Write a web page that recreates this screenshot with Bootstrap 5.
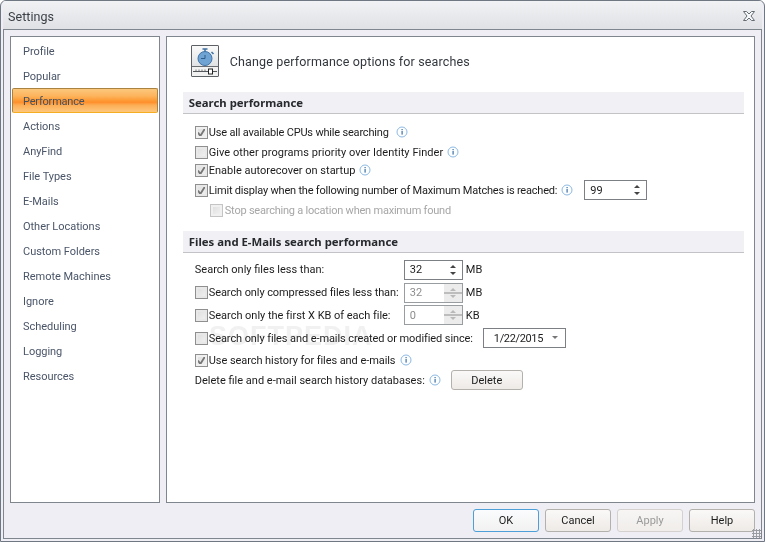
<!DOCTYPE html>
<html lang="en">
<head>
<meta charset="utf-8">
<title>Settings</title>
<link href="https://cdn.jsdelivr.net/npm/bootstrap@5.3.0/dist/css/bootstrap.min.css" rel="stylesheet">
<style>
html,body{margin:0;height:542px;overflow:hidden;background:#fff}
body{font-family:Roboto,"Liberation Sans",sans-serif;font-size:11px;color:#1c1c1c;line-height:1}
.win{width:765px;height:542px;background:#eeeef4;border:1px solid #6e7782;border-radius:6px 6px 0 0;position:relative;overflow:hidden}
.titlebar{height:29px;background:linear-gradient(#f1f2f4,#dfe1e5);padding:4px 5px 0;font-size:12.5px;color:#3a3f46;letter-spacing:.05px;border-bottom:1px solid #80868d;margin:0 2px}
.frame{height:509px;margin:0 2px;border:solid #80868d;border-width:0 1px 1px 1px;padding:6px 6px 0 6px}
.panes{height:467px;gap:6px}
.sidepane{width:150px;background:#fff;border:1px solid #80868d;padding:1px}
.sideitem{height:25px;padding:1px 0 0 11px;color:#4a5568;display:flex;align-items:center;font-size:11px;letter-spacing:-.03px}
.sideitem.chosen{color:#46505e;border:1px solid #a9833f;border-bottom-color:#f5ae22;border-radius:2px;padding-left:10px;letter-spacing:-.2px;
background:linear-gradient(#fbc77c 0,#fdb55d 30%,#fd9a35 50%,#ff8f2c 58%,#fdae56 70%,#fdc77d 100%)}
.mainpane{width:590px;background:#fff;border:1px solid #80868d;padding:8px 10px 0 16px;position:relative}
.iconbox{width:28px;height:32px;margin-left:8px;background:linear-gradient(#fafafa,#d4d6d8);border:1px solid #5d6065;border-radius:1px}
.headline{font-size:12.5px;letter-spacing:.15px;margin-left:11px;margin-top:3px;color:#33383e}
.sect{height:22px;background:#f0f0f5;border-bottom:1px solid #c2c3c6;padding-left:6px;font-family:"Noto Sans","Liberation Sans",sans-serif;font-weight:700;font-size:11.35px;color:#26292d}
.sect-a{margin-top:15px}
.sect-b{margin-top:13px}
.optgroup-a{margin-top:8px;padding-left:12px}
.optgroup-b{margin-top:5px;padding-left:12px}
.optrow{display:flex;align-items:center;position:relative}
.h16{height:16px}.h20{height:20px}.h24{height:24px}.h23{height:23px}.h22{height:22px}
.sub-row{padding-left:15px}
.tick{appearance:none;width:13px;height:13px;margin:0;flex:none;border:1px solid #8f8f8f;background:linear-gradient(135deg,#dcdcdc,#f4f4f4);box-shadow:inset 0 0 0 2px #e8e8e8}
.tick:checked{background:url("data:image/svg+xml,%3Csvg xmlns='http://www.w3.org/2000/svg' viewBox='0 0 13 13'%3E%3Cpath d='M3 6.500l2.300 3.500L10 2.500' fill='none' stroke='%23777' stroke-width='1.800'/%3E%3C/svg%3E") center/13px no-repeat,linear-gradient(135deg,#dcdcdc,#f4f4f4)}
.tick:disabled{border-color:#c4c4c4;box-shadow:inset 0 0 0 2px #f0f0f0}
.tick.keep:disabled{border-color:#8f8f8f}
.lbl{margin:0;padding-left:1px;white-space:nowrap}
.flush{margin-left:-1px}
.ls-a{letter-spacing:-.19px}
.ls-b{letter-spacing:.05px}
.ls-c{letter-spacing:-.2px}
.ls-d{letter-spacing:-.22px;padding-left:2px}
.ls-e{letter-spacing:-.09px}
.ls-f{letter-spacing:-.03px}
.ls-g{letter-spacing:0}
.ls-h{letter-spacing:-.07px}
.muted-lbl{color:#a6a6a6}
.infoicon{width:12px;height:12px;flex:none;margin-left:4px}
.infoicon.far{margin-left:7px}
.infoicon.mid{margin-left:5px}
.labcell{flex:none;display:flex;align-items:center}
.labcell.first{width:209px}
.labcell.wide{width:288px}
.spin{height:20px;border:1px solid #7c7f83;background:#fff;display:flex;align-items:stretch;flex:none;padding-left:5px}
.spin .val{flex:1;display:flex;align-items:center}
.spin .arrows{width:18px;display:flex;flex-direction:column;align-items:center;justify-content:center;gap:4px}
.spin .arrows i{display:block;width:0;height:0;border-left:3px solid transparent;border-right:3px solid transparent}
.spin .arrows i.up{border-bottom:3px solid #444}
.spin .arrows i.dn{border-top:3px solid #444}
.spin.off{border-color:#9a9da0;color:#8d8d8d}
.spin.off .arrows{background:#ececec;gap:0;justify-content:space-evenly;position:relative}
.spin.off .arrows::after{content:"";position:absolute;left:0;right:0;top:8px;height:2px;background:#bdbdbd}
.spin.off .arrows i.up{border-bottom-color:#b9b9b9}
.spin.off .arrows i.dn{border-top-color:#b9b9b9}
.w63{width:63px;margin-left:11px}.w59{width:59px}
.unit{margin-left:3px}
.datebox{width:83px;height:20px;border:1px solid #7c7f83;background:#fff;flex:none;position:relative;padding-left:10px;display:flex;align-items:center;letter-spacing:-.35px}
.datebox::after{content:"";position:absolute;right:7px;top:7px;border-left:3px solid transparent;border-right:3px solid transparent;border-top:3px solid #777}
.winbtn{width:66px;height:23px;padding:0;font-size:11px;line-height:1;color:#1c1c1c;border:1px solid #b4b0ac;border-radius:3px;background:linear-gradient(#faf9f8,#eeeae6)}
.winbtn:disabled{color:#9a9a9a;border-color:#d4d1ce;opacity:1;background:linear-gradient(#f7f6f5,#f0edea)}
.winbtn.primary{border-color:#4d9fd8;background:linear-gradient(#fbfcfd,#f1f1f1)}
.delbtn{width:72px;height:20px;margin-left:10px}
.footrow{height:23px;margin-top:6px;gap:6px}
.grip{position:absolute;right:3px;bottom:3px;width:9px;height:9px;background-image:radial-gradient(#9a9ea3 1px,transparent 1.100px);background-size:3px 3px}
.wm{position:absolute;left:208px;top:320px;font:700 27px "Liberation Sans",sans-serif;color:#f1f1f1;letter-spacing:1px;pointer-events:none;mix-blend-mode:multiply}
.closex{width:12px;height:10px;margin-right:2px;margin-top:-2px}
</style>
</head>
<body>
<svg width="0" height="0" class="position-absolute">
<symbol id="inf" viewBox="0 0 12 12"><circle cx="6" cy="6" r="5" fill="#fdfeff" stroke="#8db8e2"/><rect x="5.500" y="5" width="1.200" height="3.600" fill="#3c6ea5"/><rect x="5.500" y="3" width="1.200" height="1.200" fill="#3c6ea5"/></symbol>
</svg>
<div class="win d-flex flex-column">
  <div class="titlebar d-flex align-items-center justify-content-between">
    <span>Settings</span>
    <svg class="closex" viewBox="0 0 12 10"><path d="M.5.5h3L6 3 8.500.5h3L8 5l3.500 4.500h-3L6 7 3.500 9.500h-3L4 5z" fill="#f7f8f9" stroke="#666c74"/></svg>
  </div>
  <div class="frame">
    <div class="panes d-flex">
      <nav class="sidepane d-flex flex-column">
        <div class="sideitem">Profile</div>
        <div class="sideitem">Popular</div>
        <div class="sideitem chosen">Performance</div>
        <div class="sideitem">Actions</div>
        <div class="sideitem">AnyFind</div>
        <div class="sideitem">File Types</div>
        <div class="sideitem">E-Mails</div>
        <div class="sideitem">Other Locations</div>
        <div class="sideitem">Custom Folders</div>
        <div class="sideitem">Remote Machines</div>
        <div class="sideitem">Ignore</div>
        <div class="sideitem">Scheduling</div>
        <div class="sideitem">Logging</div>
        <div class="sideitem">Resources</div>
      </nav>
      <main class="mainpane">
        <div class="d-flex align-items-center">
          <div class="iconbox">
            <svg width="26" height="30" viewBox="0 0 26 30" class="d-block">
              <path d="M10.500 3h5M13 3v3M19.500 6l2 2" stroke="#3f6f9f" stroke-width="1.500" fill="none"/>
              <circle cx="13" cy="12.500" r="7" fill="#6fa3d4" stroke="#3f73a6"/>
              <path d="M13 9v3.500H9" stroke="#2f5b86" fill="none"/>
              <path d="M0 20.500h26" stroke="#6a6d71"/>
              <rect x="0" y="21" width="26" height="9" fill="#f1f1f1"/>
              <path d="M1 25.500h24" stroke="#55585c"/>
              <path d="M4 23.500V25M7 23.500V25M10 23.500V25M13 23.500V25" stroke="#777"/>
              <rect x="16.500" y="23" width="4" height="5" fill="#fff" stroke="#222"/>
            </svg>
          </div>
          <div class="headline">Change performance options for searches</div>
        </div>
        <div class="sect sect-a d-flex align-items-center">Search performance</div>
        <div class="optgroup-a">
          <div class="optrow h20"><input class="tick keep" type="checkbox" checked disabled><label class="lbl ls-a">Use all available CPUs while searching</label><svg class="infoicon far"><use href="#inf"/></svg></div>
          <div class="optrow h20"><input class="tick" type="checkbox"><label class="lbl ls-b">Give other programs priority over Identity Finder</label><svg class="infoicon"><use href="#inf"/></svg></div>
          <div class="optrow h16"><input class="tick" type="checkbox" checked><label class="lbl">Enable autorecover on startup</label><svg class="infoicon"><use href="#inf"/></svg></div>
          <div class="optrow h24"><input class="tick" type="checkbox" checked><label class="lbl ls-c">Limit display when the following number of Maximum Matches is reached:</label><svg class="infoicon"><use href="#inf"/></svg><div class="spin w63"><span class="val">99</span><span class="arrows"><i class="up"></i><i class="dn"></i></span></div></div>
          <div class="optrow h16 sub-row"><input class="tick" type="checkbox" disabled><label class="lbl muted-lbl ls-d">Stop searching a location when maximum found</label></div>
        </div>
        <div class="sect sect-b d-flex align-items-center">Files and E-Mails search performance</div>
        <div class="optgroup-b">
          <div class="optrow h23"><div class="labcell first"><label class="lbl flush ls-g">Search only files less than:</label></div><div class="spin w59"><span class="val">32</span><span class="arrows"><i class="up"></i><i class="dn"></i></span></div><span class="unit">MB</span></div>
          <div class="optrow h23"><div class="labcell first"><input class="tick" type="checkbox"><label class="lbl ls-e">Search only compressed files less than:</label></div><div class="spin w59 off"><span class="val">32</span><span class="arrows"><i class="up"></i><i class="dn"></i></span></div><span class="unit">MB</span></div>
          <div class="optrow h22"><div class="labcell first"><input class="tick" type="checkbox"><label class="lbl ls-f">Search only the first X KB of each file:</label></div><div class="spin w59 off"><span class="val">0</span><span class="arrows"><i class="up"></i><i class="dn"></i></span></div><span class="unit">KB</span></div>
          <div class="optrow h24"><div class="labcell wide"><input class="tick" type="checkbox"><label class="lbl ls-e">Search only files and e-mails created or modified since:</label></div><div class="datebox">1/22/2015</div></div>
          <div class="optrow h20"><input class="tick keep" type="checkbox" checked disabled><label class="lbl ls-h">Use search history for files and e-mails</label><svg class="infoicon mid"><use href="#inf"/></svg></div>
          <div class="optrow h20"><label class="lbl flush ls-g">Delete file and e-mail search history databases:</label><svg class="infoicon"><use href="#inf"/></svg><button class="btn winbtn delbtn">Delete</button></div>
        </div>
      </main>
    </div>
    <div class="footrow d-flex justify-content-end">
      <button class="btn winbtn primary">OK</button>
      <button class="btn winbtn">Cancel</button>
      <button class="btn winbtn" disabled>Apply</button>
      <button class="btn winbtn">Help</button>
    </div>
  </div>
  <div class="grip"></div>
  <div class="wm">SOFTPEDIA</div>
</div>
<script src="https://cdn.jsdelivr.net/npm/bootstrap@5.3.0/dist/js/bootstrap.bundle.min.js"></script>
</body>
</html>
